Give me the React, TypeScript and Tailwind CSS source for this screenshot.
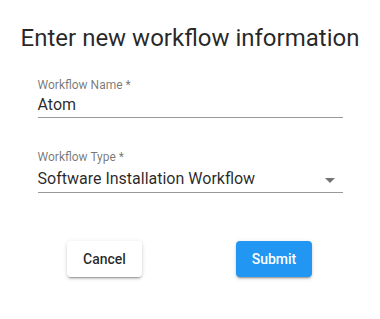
import React from "react";

function Field({
  label,
  value,
  select = false,
}: {
  label: string;
  value: string;
  select?: boolean;
}) {
  return (
    <div className="mx-auto w-[305px]">
      <div className="text-[12px] leading-[12px] text-black/55">{label}</div>
      <div
        className={`relative border-b border-black/40 ${
          select ? "mt-[6px] pb-[4px]" : "mt-[4px] pb-[3px]"
        }`}
      >
        <div className="text-[16px] leading-[19px] text-black/85">{value}</div>
        {select && (
          <svg
            viewBox="0 0 24 24"
            className="absolute right-[1px] top-[-1px] h-6 w-6 fill-black/55"
          >
            <path d="M7 10l5 5 5-5z" />
          </svg>
        )}
      </div>
    </div>
  );
}

export default function App() {
  return (
    <div
      className="h-[319px] w-[380px] bg-white"
      style={{ fontFamily: "Roboto, 'Liberation Sans', sans-serif" }}
    >
      <div className="pt-[22px] text-center text-[24px] leading-[32px] text-black/85">
        Enter new workflow information
      </div>
      <div className="mt-[25px]">
        <Field label="Workflow Name *" value="Atom" />
      </div>
      <div className="mt-[33px]">
        <Field label="Workflow Type *" value="Software Installation Workflow" select />
      </div>
      <div className="mt-[48px] flex gap-[94px] pl-[67px]">
        <button className="h-[36px] w-[75px] rounded bg-white text-[14px] font-medium text-black/85 shadow-[0_3px_1px_-2px_rgba(0,0,0,0.2),0_2px_2px_0_rgba(0,0,0,0.14),0_1px_5px_0_rgba(0,0,0,0.12)]">
          Cancel
        </button>
        <button className="h-[36px] w-[76px] rounded bg-[#2196f3] text-[14px] font-medium text-white shadow-[0_3px_1px_-2px_rgba(0,0,0,0.2),0_2px_2px_0_rgba(0,0,0,0.14),0_1px_5px_0_rgba(0,0,0,0.12)]">
          Submit
        </button>
      </div>
    </div>
  );
}
